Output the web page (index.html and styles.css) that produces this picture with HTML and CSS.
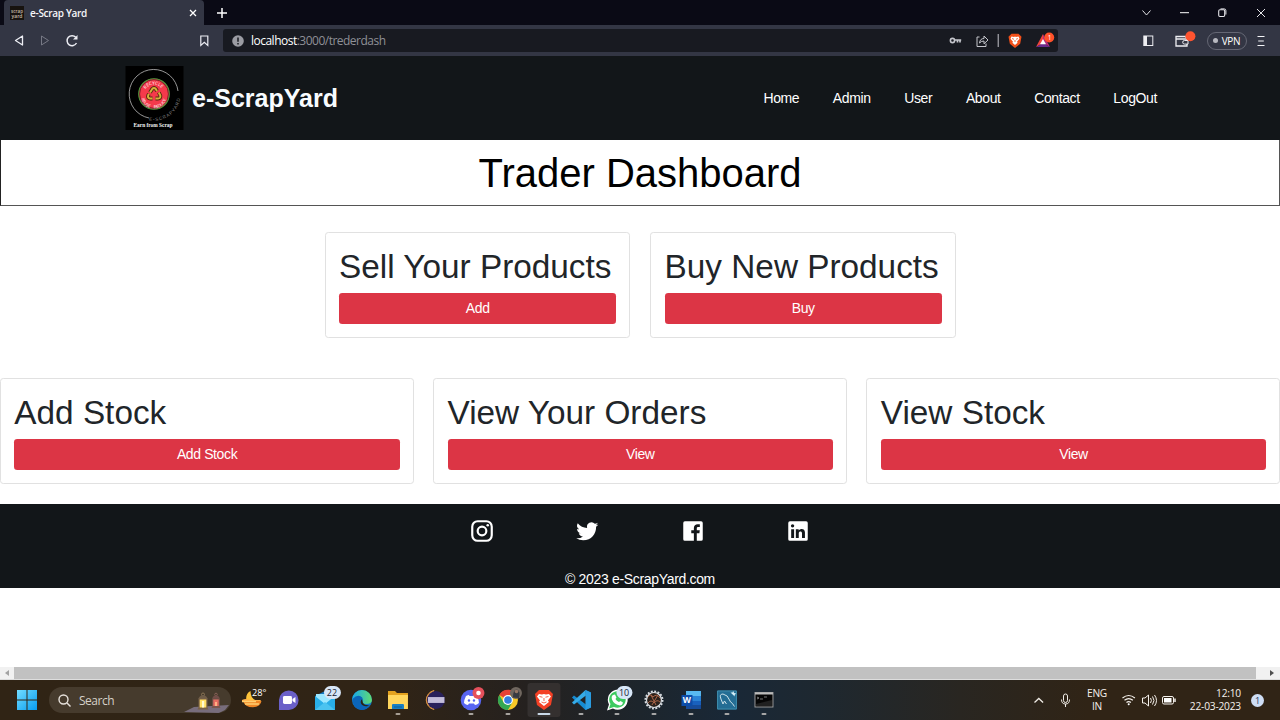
FILE: index.html
```html
<!DOCTYPE html>
<html lang="en">
<head>
<meta charset="utf-8">
<title>e-Scrap Yard</title>
<link rel="stylesheet" href="styles.css">
</head>
<body>
<div class="screen">
  <div class="tabbar">
    <div class="tab">
      <svg class="favicon" width="14" height="14" viewBox="0 0 14 14"><rect width="14" height="14" fill="#17130f"/><text x="1" y="6.500" font-size="5" textLength="12" lengthAdjust="spacingAndGlyphs" class="favtext">scrap</text><text x="1.500" y="11.800" font-size="5" textLength="11" lengthAdjust="spacingAndGlyphs" class="favtext">yard</text></svg>
      <span class="tab-title">e-Scrap Yard</span>
      <svg width="10" height="10" viewBox="0 0 10 10"><path d="M2 2l6 6M8 2l-6 6" stroke="#fff" stroke-width="1.300"/></svg>
    </div>
    <svg class="newtab" width="12" height="12" viewBox="0 0 12 12"><path d="M6 1v10M1 6h10" stroke="#fff" stroke-width="1.500"/></svg>
    <svg class="wincontrols" width="134" height="25" viewBox="1146 0 134 25" fill="none" stroke="#e4e4e8" stroke-width="1"><path d="M1142.500 10.500l4 4.500 4-4.500"/><path d="M1180 12.700h9" stroke="#fff"/><rect x="1218.700" y="9.700" width="6" height="6.800" rx="1.200" stroke-width="1.100"/><path d="M1220.500 8.900h3.700q1.700 0 1.700 1.700V14.500"/><path d="M1257 9l8 8M1265 9l-8 8"/></svg>
  </div>
  <div class="toolbar">
    <svg width="223" height="31" viewBox="0 25 223 31" fill="none" stroke="#edeef4" stroke-width="1.300"><path d="M22.500 36v9l-7-4.500z" stroke-linejoin="round"/><path d="M41.500 36v9l7-4.500z" stroke="#777985" stroke-width="1" stroke-linejoin="round"/><path d="M76.500 43a5 5 0 1 1-.7-5.700" stroke-width="1.500"/><path d="M77.500 35v4.500h-4.500z" fill="#edeef4" stroke="none"/><path d="M200.800 36h7v9.500l-3.500-3.200-3.500 3.200z" stroke-width="1.200"/></svg>
    <div class="address">
      <svg width="12" height="12" viewBox="0 0 12 12"><circle cx="6" cy="6" r="5.800" fill="#9b9ca3"/><path d="M6 2.500v4.200M6 8v1.500" stroke="#181a21" stroke-width="1.500"/></svg>
      <span class="url"><b>localhost</b>:3000/trederdash</span>
      <svg width="113" height="23" viewBox="945 29 113 23" fill="none">
        <g stroke="#c5c6cc"><circle cx="952.500" cy="40.500" r="2.100" stroke-width="1.600"/><path d="M955 40h6.200M957.500 40v2.500M960 40v2.500" stroke-width="1.700"/>
        <path d="M979.500 37h-2.500v9.500h9v-3M979.500 43q.5-4.500 4.500-4.500v-2.500l4 4-4 3.800V41q-3 0-4.500 2z"/><path d="M998.200 34v13"/></g>
        <path d="M1011.500 33.700h7l3 3-1.300 7-5.200 4.300-5.200-4.300-1.300-7z" fill="#f25019"/><path d="M1011.500 36.500l2.500.4 1-.4 1 .4 2.500-.4 1 2.300-2.500 3 .6 1-2.600 2.300-2.600-2.300.6-1-2.500-3z" fill="#fff"/><path d="M1012 38.500l2 .8M1018 38.500l-2 .8M1015 40v2" stroke="#f25019" stroke-width=".8"/>
        <path d="M1043 34l-7 13 7-4z" fill="#ef443d"/><path d="M1043 34l7 13-7-4z" fill="#b52c78"/><path d="M1036 47h14l-7-4z" fill="#6a2b8d"/><path d="M1043 39l-3 5.300h6z" fill="#fff"/><circle cx="1049.200" cy="37.500" r="5" fill="#ff512b"/><text x="1047.700" y="40" font-size="6.500" class="svgtext">1</text>
      </svg>
    </div>
    <svg class="sidepanel" width="62" height="31" viewBox="1138 25 62 31" fill="none" stroke="#eeeef2"><rect x="1143.800" y="36" width="9" height="9.500"/><path d="M1145.500 36v9" stroke-width="3"/><path d="M1186 38v-1.500h-10v9.500h11v-7h-10.500" stroke-width="1.300"/><path d="M1188 40.500h-3.500a1.800 1.800 0 0 0 0 3.600h3.500z" fill="#343744"/><circle cx="1190.400" cy="36.300" r="5" fill="#ff5430" stroke="none"/></svg>
    <div class="vpn"><span class="dot"></span>VPN</div>
    <svg class="menu" width="8" height="12" viewBox="0 0 8 12"><path d="M.5 1.500h7M1.200 6h5.600M.5 10.500h7" stroke="#f4f4f7" stroke-width="1.200"/></svg>
  </div>

  <main class="page">
    <header class="header">
      <div class="brand">
        <svg width="59" height="64" viewBox="0 0 59 64"><rect x=".5" width="58" height="64" fill="#000"/>
          <path d="M24 52A24.500 24.500 0 1 1 53 25" fill="none" stroke="#bbb" stroke-width=".8"/>
          <circle cx="29" cy="28" r="15.300" fill="#f5394b" stroke="#4e9b3d" stroke-width="1.100"/><circle cx="29" cy="28" r="14.400" fill="none" stroke="#351014" stroke-width=".6"/>
          <defs><path id="top" d="M19.500 26a9.800 9.800 0 0 1 19 0"/><path id="bottom" d="M16 29.500a13 13 0 0 0 26 0"/><path id="ring" d="M24 54.500A27 27 0 0 0 55.500 25"/></defs>
          <text class="svgtext" font-size="4.500"><textPath href="#top" startOffset="3">RECYCLE</textPath></text>
          <text class="svgtext" font-size="4.300" word-spacing="3"><textPath href="#bottom" startOffset="3">REUSE REDUCE</textPath></text>
          <text class="ringtext" font-size="4.500" letter-spacing="1"><textPath href="#ring">E-SCRAPYARD</textPath></text>
          <g fill="none" stroke="#54280f" stroke-width="3.800"><path d="M25 26.500l2.200-3.500q1.800-2 3.600 0l1.200 2M33.800 26.500l1.500 3q.5 3-2.300 3h-2.500M27.500 32.500h-2.500q-2.700-.5-1.800-3.200l.8-1.300"/></g>
          <g fill="none" stroke="#d6b13a" stroke-width="2"><path d="M25 26.500l2.200-3.500q1.800-2 3.600 0l1.200 2M33.800 26.500l1.500 3q.5 3-2.300 3h-2.500M27.500 32.500h-2.500q-2.700-.5-1.800-3.200l.8-1.300"/></g>
          <text x="8.500" y="60.800" font-size="5.300" textLength="39" lengthAdjust="spacingAndGlyphs" class="tagline">Earn from Scrap</text>
        </svg>
        <span class="brand-name">e-ScrapYard</span>
      </div>
      <nav class="nav"><a>Home</a><a>Admin</a><a>User</a><a>About</a><a>Contact</a><a>LogOut</a></nav>
    </header>
    <div class="dash-title">Trader Dashboard</div>
    <section class="row row-center">
      <div class="card"><h1>Sell Your Products</h1><button class="btn">Add</button></div>
      <div class="card"><h1>Buy New Products</h1><button class="btn">Buy</button></div>
    </section>
    <section class="row row-wide">
      <div class="card"><h1>Add Stock</h1><button class="btn">Add Stock</button></div>
      <div class="card"><h1>View Your Orders</h1><button class="btn">View</button></div>
      <div class="card"><h1>View Stock</h1><button class="btn">View</button></div>
    </section>
    <footer class="footer">
      <div class="social">
        <svg width="26" height="26" viewBox="0 0 24 24" fill="none" stroke="#fff" stroke-width="2"><rect x="3" y="3" width="18" height="18" rx="5"/><circle cx="12" cy="12" r="4"/><circle cx="17.300" cy="6.700" r="1.200" fill="#fff" stroke="none"/></svg>
        <svg width="26" height="26" viewBox="0 0 24 24" fill="#fff"><path transform="translate(.3 .3)" d="M22.160 5.660a8.400 8.400 0 0 1-2.400.66 4.200 4.200 0 0 0 1.840-2.320 8.400 8.400 0 0 1-2.660 1.020 4.190 4.190 0 0 0-7.140 3.820A11.880 11.880 0 0 1 3.170 4.460a4.190 4.190 0 0 0 1.300 5.590 4.160 4.160 0 0 1-1.900-.52v.05a4.190 4.190 0 0 0 3.360 4.110 4.200 4.200 0 0 1-1.890.07 4.190 4.190 0 0 0 3.910 2.910A8.400 8.400 0 0 1 1.750 18.400a11.850 11.850 0 0 0 6.420 1.880c7.700 0 11.910-6.380 11.910-11.910l-.01-.54a8.500 8.500 0 0 0 2.090-2.170z"/></svg>
        <svg width="26" height="26" viewBox="0 0 24 24" fill="#fff"><path d="M4.500 3h15A1.500 1.500 0 0 1 21 4.500v15a1.500 1.500 0 0 1-1.500 1.500h-4v-7h2.400l.35-2.700H15.500V9.500c0-.8.250-1.300 1.400-1.300h1.400V5.800c-.25-.03-1.100-.1-2-.1-2.100 0-3.500 1.300-3.500 3.600v2h-2.400V14h2.400v7H4.500A1.500 1.500 0 0 1 3 19.500v-15A1.500 1.500 0 0 1 4.500 3z"/></svg>
        <svg width="26" height="26" viewBox="0 0 24 24" fill="#fff"><path fill-rule="evenodd" d="M4.500 3h15A1.500 1.500 0 0 1 21 4.500v15a1.500 1.500 0 0 1-1.500 1.500h-15A1.500 1.500 0 0 1 3 19.500v-15A1.500 1.500 0 0 1 4.500 3zm1.200 7.300v8.200h2.700v-8.200zM7 5.700a1.500 1.500 0 1 0 0 3.100 1.500 1.500 0 0 0 0-3.100zm3 4.600v8.200h2.700v-4.400c0-2 3-2.200 3 0v4.400h2.700v-5.200c0-3.700-4-3.900-5.800-1.800v-1.200z"/></svg>
      </div>
      <p>© 2023 e-ScrapYard.com</p>
    </footer>
  </main>

  <div class="scrollbar"><span class="arrow left"></span><span class="thumb"></span><span class="arrow right"></span></div>

  <div class="taskbar">
    <svg class="start" width="20" height="20" viewBox="0 0 20 20"><defs><linearGradient id="win" x2="1" y2="1"><stop stop-color="#72dcff"/><stop offset="1" stop-color="#079cf0"/></linearGradient></defs><path d="M0 0h9.500v9.500H0zM10.500 0H20v9.500h-9.500zM0 10.500h9.500V20H0zM10.500 10.500H20V20h-9.500z" fill="url(#win)"/></svg>
    <div class="search">
      <svg width="13" height="13" viewBox="0 0 13 13" fill="none" stroke="#e7e2dc" stroke-width="1.400"><circle cx="5.500" cy="5.500" r="4.500"/><path d="M9 9l3.500 3.500"/></svg>
      <span>Search</span>
      <svg width="47" height="26" viewBox="184 687 47 26"><path d="M184 712l10-5 35-2-4 5-6 3z" fill="#786d7c"/><circle cx="203" cy="694.500" r="1.500" fill="none" stroke="#8a7555"/><path d="M198.300 699q1-3.500 4.700-4 3.700.5 4.700 4z" fill="#6f5d49"/><path d="M198.500 698.500h9v9l1 2h-11l1-2z" fill="#796148"/><path d="M199.700 699.500h6.600v8h-6.600z" fill="#ffdc61"/><path d="M202 701h2.200v6.500H202z" fill="#fffad0"/><circle cx="216" cy="694.500" r="1.300" fill="none" stroke="#876158"/><path d="M212 698.500q1-3 4-3.500 3 .5 4 3.500z" fill="#724e49"/><path d="M212.300 698.500h7.400v7.500l.8 2h-9l.8-2z" fill="#79564e"/><path d="M213.300 699.500h5.400v6.500h-5.400z" fill="#e66c61"/><path d="M215 702h2v4h-2z" fill="#ffb083"/></svg>
    </div>
    <div class="apps">
      <svg viewBox="0 0 36.600 40"><path d="M16.500 11q-5.500 3-4 10h12q-8-1-8-10z" fill="#ffc43a"/><path d="M8 20q4-2 8 0h11l-1 2H8z" fill="#ffb149"/><path d="M9 21h18.500q-1 6-8.500 6.300-8 0-10-6.300z" fill="#ef8626"/><path d="M8 21.500h14M11 24h14" stroke="#ffd071" stroke-width="1.500"/><text x="18" y="16" font-size="9" textLength="14.500" lengthAdjust="spacingAndGlyphs" class="svgtext">28°</text></svg>
      <svg viewBox="0 0 36.600 40"><path d="M8 30V20a9.800 9.800 0 1 1 10 10z" fill="#6a60c8"/><rect x="12" y="16" width="9" height="8" rx="1.500" fill="#fff"/><path d="M21.500 19l3-2v6l-3-2z" fill="#fff"/></svg>
      <svg viewBox="0 0 36.600 40"><path d="M8 16l10-5 10 5v14H8z" fill="#1477be"/><path d="M9 14h18v10H9z" fill="#9be7ff"/><path d="M8 16l10 8 10-8v14H8z" fill="#29afe9"/><path d="M8 30l10-8 10 8z" fill="#4bc3f0"/><rect x="17" y="6" width="17" height="13" rx="6.500" fill="#d8e7f8"/><text x="19.800" y="15.800" font-size="9" class="badgetext">22</text></svg>
      <svg viewBox="0 0 36.600 40"><defs><linearGradient id="edge" x2="1"><stop stop-color="#16a7ed"/><stop offset="1" stop-color="#61db72"/></linearGradient></defs><circle cx="18" cy="20" r="10" fill="#1079c9"/><path d="M8 20a10 10 0 0 1 20 0q0 4-6 4c-5 0-3-3-3-5q-2-5-11 1z" fill="url(#edge)"/><path d="M8.500 19q6-6 10-1c-5 3 0 9 7 8q-3 4-8 4-9-1-9-11z" fill="#0b65b9"/><path d="M18 19c-4 4 2 10 8 6q-5 1-7-2z" fill="#2a2415"/></svg>
      <svg viewBox="0 0 36.600 40"><path d="M8 11h7l2 2h11v5H8z" fill="#e3a21f"/><path d="M8 15h20v14H8z" fill="#ffd65d"/><path d="M12 29v-4q0-1 1-1h10q1 0 1 1v4z" fill="#177fc4"/><path d="M14 27h8" stroke="#0c5f98"/><rect x="15.500" y="33" width="5" height="2" rx="1" fill="#a79f94"/></svg>
      <svg viewBox="0 0 36.600 40"><path d="M17 10.500a9.700 9.700 0 0 0 0 19q-8.500-9.500 0-19z" fill="#e99a36" stroke="#d99343"/><circle cx="19" cy="20" r="9" fill="#29215b"/><path d="M11 17h16.500v6H11z" fill="#b9b3d2"/><path d="M11 19h16M11 21h16" stroke="#ded9ed" stroke-width=".6"/></svg>
      <svg viewBox="0 0 36.600 40"><circle cx="18" cy="20" r="10.300" fill="#5865f2"/><path d="M13 16q2-1 3-1l.5 1h4l.5-1q1 0 3 1 2 4 2 7-2 2-4 2l-1-1.500h-5L15 25q-2 0-4-2 0-3 2-7z" fill="#fff"/><circle cx="16" cy="20.500" r="1.200" fill="#5865f2"/><circle cx="21" cy="20.500" r="1.200" fill="#5865f2"/><circle cx="25.500" cy="13" r="6" fill="#e5505b"/><circle cx="25.500" cy="13" r="2.300" fill="#fff"/><rect x="15.500" y="33" width="5" height="2" rx="1" fill="#a7a39e"/></svg>
      <svg viewBox="0 0 36.600 40"><circle cx="18" cy="20" r="10" fill="#f9c927"/><path d="M18 20L9.300 15A10 10 0 0 1 27 15H18z" fill="#e64235"/><path d="M9.300 15A10 10 0 0 0 18 30l4.500-8-8.500 1z" fill="#34a853"/><circle cx="18" cy="20" r="5" fill="#fff"/><circle cx="18" cy="20" r="3.800" fill="#347edf"/><circle cx="26" cy="13" r="6" fill="#70675f"/><path d="M23 17.500q0-8 4-8 4 2 2 8.500z" fill="#383b42"/><circle cx="26.500" cy="11.500" r="1.800" fill="#967765"/><rect x="15.500" y="33" width="5" height="2" rx="1" fill="#a7a39e"/></svg>
      <svg viewBox="0 0 36.600 40"><rect x="1.500" y="3" width="33" height="34" rx="3" fill="#34302f"/><path d="M13 10h10l4 4-2 11-7 5-7-5-2-11z" fill="#f44025"/><path d="M13 14l3 .5 2-.5 2 .5 3-.5 2 2.500-3 4 1 1.500-5 4-5-4 1-1.500-3-4z" fill="#fff"/><path d="M13.500 16.500l3 .7M22.500 16.500l-3 .7M18 18v3M15.500 22l2.500 1 2.500-1" fill="none" stroke="#f44025" stroke-width=".8"/><rect x="11.500" y="33" width="13" height="2" rx="1" fill="#c9d8e7"/></svg>
      <svg viewBox="0 0 36.600 40"><path d="M22.500 10l5.500 2.500v15L22.500 30 9 17.500l2-2 12 9v-10z" fill="#168bd2"/><path d="M22.500 10l.5 5.500-12 9-2-2z" fill="#35abe8"/><path d="M22.500 10l5.500 2.500v15L22.500 30z" fill="#2b9de1"/><rect x="15.500" y="33" width="5" height="2" rx="1" fill="#a7a7a7"/></svg>
      <svg viewBox="0 0 36.600 40"><path d="M8 30.500l2-6A10 10 0 1 1 14 28.500z" fill="#fff"/><path d="M10 28.500l1.500-4.500A8.300 8.300 0 1 1 15 27z" fill="#3dca60"/><path d="M14 15l2-.5 1.500 3-1 1.500q1 2 3.500 3l1.500-1 2.500 1.500q-.5 3-3 3-6-1-8-6-1-3 1-4.500z" fill="#fff"/><rect x="17.500" y="6" width="16" height="13" rx="6.500" fill="#d8e7f8"/><text x="20" y="15.800" font-size="9" class="badgetext">10</text><rect x="15.500" y="33" width="5" height="2" rx="1" fill="#a7a7a7"/></svg>
      <svg viewBox="0 0 36.600 40"><circle cx="18" cy="20" r="7.500" fill="#2b211b" stroke="#d9dde2" stroke-width="1.200"/><circle cx="18" cy="20" r="8.600" fill="none" stroke="#d9dde2" stroke-width="1.900" stroke-dasharray="1.900 1.477"/><path d="M12 17q3-4 5 0 4-4 7 1M12 23q3-4 6 0 3-4 6-1M15 15l5 10M22 15l-6 10" fill="none" stroke="#ad6548"/><rect x="15.500" y="33" width="5" height="2" rx="1" fill="#a7a7a7"/></svg>
      <svg viewBox="0 0 36.600 40"><path d="M13 11h15v18H13z" fill="#174c9a"/><path d="M13 11h15v5H13z" fill="#59b9f0"/><path d="M13 16h15v5H13z" fill="#2b83d6"/><path d="M13 21h15v4H13z" fill="#1961be"/><rect x="8.500" y="15" width="11" height="11" fill="#0d4da9"/><text x="9.700" y="23.500" font-size="8.500" font-weight="700" class="svgtext">W</text><rect x="15.500" y="33" width="5" height="2" rx="1" fill="#a7a7a7"/></svg>
      <svg viewBox="0 0 36.600 40"><rect x="8" y="10.500" width="20" height="19" rx="1" fill="#246d94"/><path d="M8.500 11h19v18h-19z" fill="none" stroke="#3d8bab"/><path d="M14 24l-2-5q-2-5 2-5 5 1 6.500 6 .5 2 3 3.500l2 3M14 24l1.500-3 2 3" fill="none" stroke="#cce1e8"/><path d="M21.500 12.500h2l.7-1.500 1 2 2 .5-1.500 1.500v1.500l-1.500-1.500z" fill="#d6f0f8"/><rect x="15.500" y="33" width="5" height="2" rx="1" fill="#a7a7a7"/></svg>
      <svg viewBox="0 0 36.600 40"><rect x="9" y="12.500" width="18" height="14.500" fill="#050505" stroke="#9b9b9b"/><path d="M9 13.500h18" stroke="#bbb" stroke-width="2"/><path d="M11 17l2 1-2 1M14 19h3M18 17h3" stroke="#aaa" stroke-width=".7" fill="none"/><path d="M10 24l16-4v6H10z" fill="#202020"/><rect x="15.500" y="33" width="5" height="2" rx="1" fill="#a7a7a7"/></svg>
    </div>
    <div class="tray">
      <svg width="43" height="40" viewBox="1031 680 43 40" fill="none" stroke="#f0ece6"><path d="M1034.500 702.500l4.300-4 4.300 4" stroke-width="1.300"/><rect x="1063.500" y="694" width="4" height="8.500" rx="2"/><path d="M1061.500 699.500q0 4.500 4 4.500t4-4.500M1065.500 704v3"/></svg>
      <div class="lang"><span>ENG</span><span>IN</span></div>
      <svg width="58" height="40" viewBox="1120 680 58 40" fill="none" stroke="#f5f1ec"><path d="M1122.500 698q6.200-5 12.400 0M1124.500 700.300q4.200-3.300 8.400 0M1126.500 702.500q2.200-1.700 4.400 0" stroke-width="1.200"/><circle cx="1128.700" cy="704.300" r="1" fill="#fff" stroke="none"/><path d="M1142.500 698h2.500l3.500-3v11l-3.500-3h-2.500zM1150.500 698q1.800 2.500 0 5M1152.500 696.500q3 4 0 8M1154.500 695q4 5.500 0 11"/><rect x="1162.500" y="696.500" width="11" height="7.500" rx="1.500"/><rect x="1164" y="698" width="7.500" height="4.500" fill="#fff" stroke="none"/><path d="M1175 698.500v3.500" stroke-width="1.500"/></svg>
      <div class="clock"><span>12:10</span><span>22-03-2023</span></div>
      <div class="notify">1</div>
    </div>
  </div>
</div>
</body>
</html>
```
FILE: styles.css
```css
* { box-sizing: border-box; }
body { margin: 0; background: #fff; font-family: "Liberation Sans", Arial, sans-serif; }
svg { display: block; flex: none; }
.screen { width: 1280px; height: 720px; overflow: hidden; display: flex; flex-direction: column; }
.tabbar { height: 25px; background: #0a0a15; display: flex; align-items: flex-start; }
.tab { width: 200px; height: 25px; margin-left: 4px; padding: 0 6px; border-radius: 4px 4px 0 0; background: #333644; display: flex; align-items: center; gap: 6px; font: 600 10px "Open Sans", sans-serif; color: #f5f5f8; }
.tab-title { flex: 1; letter-spacing: -.3px; white-space: nowrap; }
.favtext { fill: #c7bba8; font-family: "Open Sans", sans-serif; }
.newtab { margin: 7px 0 0 12px; }
.wincontrols { margin-left: auto; overflow: visible; }
.toolbar { height: 31px; background: #333644; display: flex; align-items: center; }
.address { width: 835px; height: 23px; background: #181a21; border-radius: 3px; display: flex; align-items: center; padding-left: 9px; }
.url { flex: 1; margin-left: 7px; color: #8f9097; font: 12px "Open Sans", sans-serif; letter-spacing: -.51px; }
.url b { font-weight: 400; color: #fff; }
.sidepanel { margin-left: 80px; }
.vpn { width: 40px; height: 18px; margin-left: 6.500px; border: 1px solid #656774; border-radius: 9px; display: flex; align-items: center; justify-content: center; gap: 4px; font: 10px "Open Sans", sans-serif; letter-spacing: -.3px; color: #fff; }
.dot { width: 5px; height: 5px; border-radius: 50%; background: #b8b9c0; }
.menu { margin-left: 10.500px; }
.svgtext { fill: #fff; font-family: "Open Sans", sans-serif; }
.badgetext { fill: #172334; font-family: "Open Sans", sans-serif; }
.ringtext { fill: #888; font-family: "Liberation Sans", sans-serif; }
.tagline { fill: #f5f5f5; font-family: "Liberation Serif", serif; font-weight: 700; }
.page { height: 611px; background: #fff; font-size: 14px; letter-spacing: -.38px; color: #212529; }
.header { height: 84px; background: #121619; padding: 0 123px 0 125px; display: flex; align-items: center; justify-content: space-between; }
.brand { display: flex; align-items: center; gap: 8px; color: #f8fcff; letter-spacing: 0; }
.brand-name { font-size: 25px; font-weight: 700; line-height: 30px; padding-bottom: 1px; }
.nav { display: flex; gap: 33.600px; color: #fff; }
.dash-title { height: 66px; border: 1px solid #555; border-top: 0; border-left-color: #222; color: #000; font-size: 40px; line-height: 66px; letter-spacing: 0; text-align: center; }
.row { display: grid; gap: 20px; }
.row-center { grid-template-columns: 305.500px 305.500px; justify-content: center; padding-top: 26px; }
.row-wide { grid-template-columns: repeat(3, 1fr); padding-top: 40px; gap: 19.700px; }
.card { height: 106px; border: 1px solid #e1e1e1; border-radius: 3.300px; padding: 13.333px; padding-right: 12.700px; }
.card h1 { margin: 0 0 6.667px; height: 40px; font-size: 33.333px; font-weight: 400; line-height: 41px; letter-spacing: 0; white-space: nowrap; }
.row-center .card { padding-left: 13.600px; }
.btn { display: block; width: 100%; height: 31px; border: 0; border-radius: 3.300px; background: #dc3545; color: #fff; font: 14px "Liberation Sans", Arial, sans-serif; letter-spacing: -.38px; padding: 0; }
.footer { margin-top: 20px; height: 83.500px; background: #121619; color: #fff; text-align: center; padding-top: 14px; }
.social { display: flex; justify-content: center; gap: 79.300px; }
.footer p { margin: 27px 0 0; line-height: 16px; letter-spacing: -.33px; }
.scrollbar { height: 13px; background: #f1f1f1; display: flex; align-items: center; border-bottom: 1px solid #ddd; }
.thumb { width: 1242px; height: 12px; margin: 0 14px 0 5px; background: #c1c1c1; }
.arrow { border: 3px solid transparent; }
.left { border-right: 4px solid #a3a3a3; border-left: 0; margin-left: 5px; }
.right { border-left: 4px solid #505050; border-right: 0; }
.taskbar { height: 40px; background: linear-gradient(90deg, #302415 0, #302416 31%, #25211f 41%, #1d252c 50%, #192837 57%, #1e2830 64%, #292621 75%, #302416 85%); display: flex; align-items: center; font-family: "Open Sans", sans-serif; color: #f5f1ec; }
.start { margin-left: 17px; }
.search { width: 182px; height: 26px; margin-left: 12px; border-radius: 13px; background: #463b2d; overflow: hidden; display: flex; align-items: center; gap: 8px; padding-left: 9px; font-size: 12px; }
.search span { flex: 1; letter-spacing: -.5px; color: #d5d0c8; }
.apps { display: flex; margin-left: 3px; }
.apps svg { width: 36.550px; height: 40px; }
.tray { flex: 1; display: flex; align-items: center; justify-content: flex-end; }
.lang { width: 46px; display: flex; flex-direction: column; align-items: center; font-size: 10.200px; line-height: 13px; letter-spacing: -.2px; }
.clock { width: 63px; display: flex; flex-direction: column; align-items: flex-end; font-size: 10.200px; line-height: 13px; letter-spacing: -.2px; white-space: nowrap; }
.notify { width: 13px; height: 13px; margin: 0 16px 0 10px; border-radius: 50%; background: #cfdef5; color: #243b60; font-size: 9px; line-height: 13px; text-align: center; }
```
